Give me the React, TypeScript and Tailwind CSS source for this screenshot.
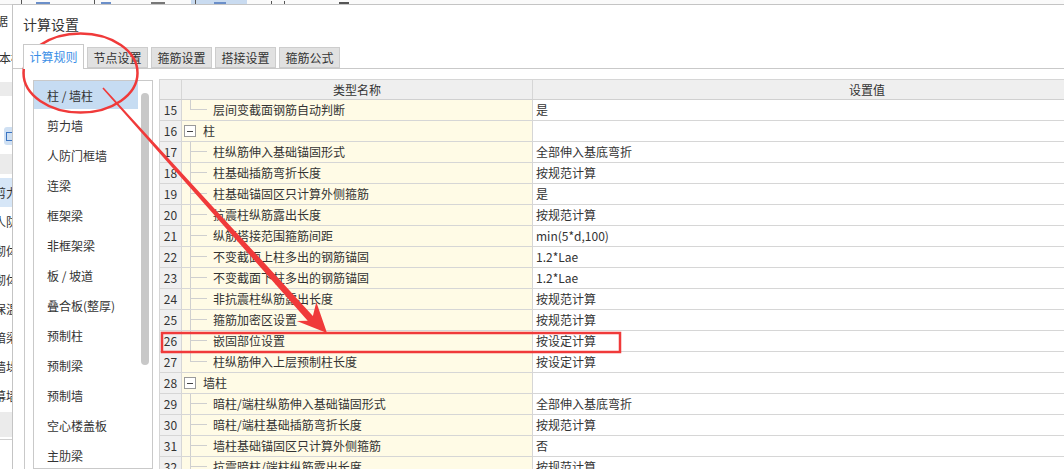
import React from "react";

type Row = { n: number; name: string; val?: string; group?: boolean; last?: boolean };

const rows: Row[] = [
  { n: 15, name: "层间变截面钢筋自动判断", val: "是", last: true },
  { n: 16, name: "柱", group: true },
  { n: 17, name: "柱纵筋伸入基础锚固形式", val: "全部伸入基底弯折" },
  { n: 18, name: "柱基础插筋弯折长度", val: "按规范计算" },
  { n: 19, name: "柱基础锚固区只计算外侧箍筋", val: "是" },
  { n: 20, name: "抗震柱纵筋露出长度", val: "按规范计算" },
  { n: 21, name: "纵筋搭接范围箍筋间距", val: "min(5*d,100)" },
  { n: 22, name: "不变截面上柱多出的钢筋锚固", val: "1.2*Lae" },
  { n: 23, name: "不变截面下柱多出的钢筋锚固", val: "1.2*Lae" },
  { n: 24, name: "非抗震柱纵筋露出长度", val: "按规范计算" },
  { n: 25, name: "箍筋加密区设置", val: "按规范计算" },
  { n: 26, name: "嵌固部位设置", val: "按设定计算" },
  { n: 27, name: "柱纵筋伸入上层预制柱长度", val: "按设定计算", last: true },
  { n: 28, name: "墙柱", group: true },
  { n: 29, name: "暗柱/端柱纵筋伸入基础锚固形式", val: "全部伸入基底弯折" },
  { n: 30, name: "暗柱/端柱基础插筋弯折长度", val: "按规范计算" },
  { n: 31, name: "墙柱基础锚固区只计算外侧箍筋", val: "否" },
  { n: 32, name: "抗震暗柱/端柱纵筋露出长度", val: "按规范计算" },
];

const components = [
  "剪力墙",
  "人防门框墙",
  "连梁",
  "框架梁",
  "非框架梁",
  "板 / 坡道",
  "叠合板(整厚)",
  "预制柱",
  "预制梁",
  "预制墙",
  "空心楼盖板",
  "主肋梁",
];

const tabs = ["节点设置", "箍筋设置", "搭接设置", "箍筋公式"];

const behind = ["剪力墙", "人防门框墙", "砌体墙", "砌体加筋", "保温墙", "暗梁", "墙垛", "幕墙"];

function TableRow({ row }: { row: Row }) {
  return (
    <div className="flex h-[21px] shrink-0 border-b border-[#d6d6d6]">
      <div className="w-[22px] shrink-0 border-r border-[#d6d6d6] bg-[#f0f0f0] flex items-center justify-center text-[#333]">
        {row.n}
      </div>
      <div className="w-[351px] shrink-0 border-r border-[#d6d6d6] bg-[#fffbe6] flex items-stretch">
        {row.group ? (
          <>
            <div className="ml-[2px] self-center w-[12px] h-[12px] border border-[#9a9a9a] bg-white flex items-center justify-center">
              <div className="w-[6px] h-[1px] bg-[#444]" />
            </div>
            <span className="ml-[7px] self-center">{row.name}</span>
          </>
        ) : (
          <>
            <div className="ml-[8px] w-[17px] flex flex-col">
              <div className="h-[10px] border-l border-b border-[#cfcfcf]" />
              {!row.last && <div className="flex-1 border-l border-[#cfcfcf]" />}
            </div>
            <span className="ml-[6px] self-center">{row.name}</span>
          </>
        )}
      </div>
      <div className="w-[668px] shrink-0 bg-white flex items-center pl-[3px]">{row.val}</div>
    </div>
  );
}

function Overlay() {
  return (
    <svg className="absolute inset-0 pointer-events-none" width="1064" height="469" viewBox="0 0 1064 469">
      <ellipse cx="80.5" cy="73" rx="57" ry="39.5" fill="none" stroke="#f03a3a" strokeWidth="2.5" />
      <polygon
        fill="#f03a3a"
        points="102.4,88.5 307.7,320.7 296.8,320.9 327,333 316.3,301.9 312.9,316.0 103.6,87.5"
      />
      <rect x="162" y="333" width="458" height="19" fill="none" stroke="#f03a3a" strokeWidth="2.5" />
    </svg>
  );
}

export default function App() {
  return (
    <div className="relative w-[1064px] h-[469px] overflow-hidden bg-white text-[12px] text-[#333] font-['Noto_Sans_CJK_SC','Noto_Sans',sans-serif] flex flex-col">
      {/* toolbar of the window behind */}
      <div className="h-[4px] shrink-0 flex items-end gap-[6px] pl-[21px] overflow-hidden bg-[#fafafa]">
        <div className="w-[1px] h-[4px] bg-[#555]" />
        <div className="w-[14px] h-[2px] bg-[#6b8fc9] ml-[8px]" />
        <div className="w-[1px] h-[4px] bg-[#555] ml-[38px]" />
        <div className="w-[10px] h-[2px] bg-[#6b8fc9]" />
        <div className="w-[14px] h-[2px] bg-[#777] ml-[34px]" />
        <div className="w-[56px] h-[4px] bg-[#c9dbf0] ml-[20px] flex items-end gap-[8px] px-[4px]">
          <div className="w-[1px] h-[4px] bg-[#555]" />
          <div className="w-[12px] h-[2px] bg-[#6b8fc9] ml-[10px]" />
        </div>
        <div className="w-[1px] h-[3px] bg-[#555] ml-[18px]" />
        <div className="w-[1px] h-[3px] bg-[#555] ml-[6px]" />
        <div className="w-[10px] h-[2px] bg-[#555] ml-[48px]" />
      </div>

      <div className="flex flex-1 min-h-0">
        {/* left strip of the window behind */}
        <div className="w-[12px] shrink-0 overflow-hidden flex flex-col whitespace-nowrap border-t border-[#d0d0d0]">
          <div className="h-[32px] shrink-0 flex items-center">
            <span className="-ml-[4px]">据</span>
          </div>
          <div className="h-[42px] shrink-0 flex items-center">
            <span className="-ml-[1px]">本框</span>
          </div>
          <div className="h-[14px] shrink-0 mt-[3px] bg-[#ebebeb]" />
          <div className="h-[30px] shrink-0" />
          <div className="h-[20px] shrink-0 flex items-center">
            <div className="ml-[4px] w-[14px] h-[18px] rounded-[3px] bg-[#cfe0f3] flex items-center pl-[2px]">
              <div className="w-[8px] h-[9px] border border-[#3b74c2]" />
            </div>
          </div>
          <div className="h-[8px] shrink-0" />
          <div className="h-[20px] shrink-0 bg-[#ebebeb]" />
          <div className="h-[4px] shrink-0" />
          {behind.map((b, i) => (
            <div key={b} className={`h-[29px] shrink-0 flex items-center ${i === 0 ? "bg-[#d6e6f7]" : ""}`}>
              <span className="-ml-[6px]">{b}</span>
            </div>
          ))}
          <div className="h-[25px] shrink-0 bg-[#ebebeb] mt-[2px]" />
          <div className="border-t border-[#d0d0d0] mt-[2px]" />
        </div>

        {/* dialog */}
        <div className="flex-1 min-w-0 flex flex-col border-l border-t border-[#c4c4c4] bg-white">
          <div className="h-[38px] shrink-0 flex items-center pl-[10px] text-[14px] text-[#333]">计算设置</div>

          <div className="h-[26px] shrink-0 flex items-end gap-[3px] pl-[10px] border-b border-[#c9c9c9]">
            <div className="w-[61px] h-[25px] -mb-[1px] relative z-10 bg-white border border-b-0 border-[#c9c9c9] flex items-center justify-center text-[#3a8ee6]">
              计算规则
            </div>
            {tabs.map((t) => (
              <div
                key={t}
                className="w-[61px] h-[21px] bg-[#e1e1e1] border border-[#cdcdcd] flex items-center justify-center text-[#333]"
              >
                {t}
              </div>
            ))}
          </div>

          <div className="flex-1 min-h-0 ml-[11px] border-l border-[#c9c9c9] pl-[8px] pt-[10px] flex gap-[6px] overflow-hidden">
            {/* component list */}
            <div className="w-[120px] shrink-0 mt-[1px] border border-[#c9c9c9] flex">
              <div className="w-[104px] flex flex-col">
                <div className="h-[28px] shrink-0 mb-[2px] bg-[#c6dcf2] flex items-center pl-[13px] pt-[2px]">
                  柱 / 墙柱
                </div>
                {components.map((c) => (
                  <div key={c} className="h-[30px] shrink-0 flex items-center pl-[13px]">
                    {c}
                  </div>
                ))}
              </div>
              <div className="flex-1 pt-[12px] pl-[3px]">
                <div className="w-[8px] h-[272px] rounded-full bg-[#c8c8c8]" />
              </div>
            </div>

            {/* settings table */}
            <div className="flex-1 min-w-0 overflow-hidden">
              <div className="w-[1041px] border-l border-t border-[#d6d6d6]">
                <div className="flex h-[20px] border-b border-[#d0d0d0] bg-[#efefef]">
                  <div className="w-[22px] shrink-0 border-r border-[#d6d6d6]" />
                  <div className="w-[351px] shrink-0 border-r border-[#d6d6d6] flex items-center justify-center">
                    类型名称
                  </div>
                  <div className="w-[668px] shrink-0 flex items-center justify-center">设置值</div>
                </div>
                {rows.map((r) => (
                  <TableRow key={r.n} row={r} />
                ))}
              </div>
            </div>
          </div>
        </div>
      </div>

      <Overlay />
    </div>
  );
}
